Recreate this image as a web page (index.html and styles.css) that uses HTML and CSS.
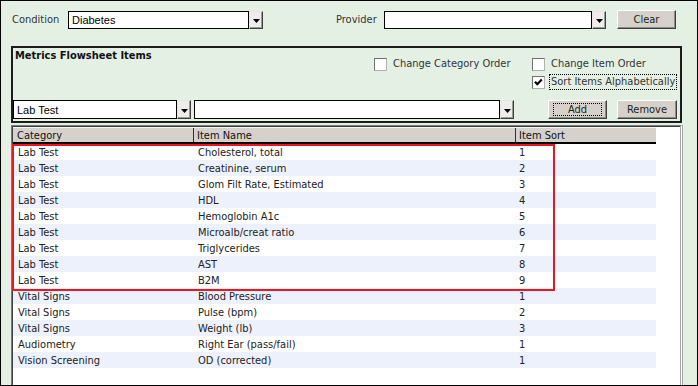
FILE: index.html
```html
<!DOCTYPE html>
<html>
<head>
<meta charset="utf-8">
<title>Metrics Flowsheet</title>
<link rel="stylesheet" href="styles.css">
</head>
<body>
<div class="window">
  <div class="toprow">
    <span class="lbl lbl-cond">Condition</span>
    <div class="combo c-cond"><span class="combo-text">Diabetes</span></div>
    <span class="ddbtn"><svg width="7" height="4" viewBox="0 0 7 4"><path d="M0 0h7L3.5 4z" fill="#000"/></svg></span>
    <span class="lbl lbl-prov">Provider</span>
    <div class="combo c-prov"></div>
    <span class="ddbtn"><svg width="7" height="4" viewBox="0 0 7 4"><path d="M0 0h7L3.5 4z" fill="#000"/></svg></span>
    <button class="btn btn-clear">Clear</button>
  </div>

  <div class="group">
    <div class="group-head">
      <div class="group-title">Metrics Flowsheet Items</div>
      <div class="checks">
        <label class="chk"><span class="box"></span><span class="chk-text">Change Category Order</span></label>
        <label class="chk"><span class="box"></span><span class="chk-text">Change Item Order</span></label>
        <span class="chk-empty"></span>
        <label class="chk"><span class="box"><svg width="11" height="11" viewBox="0 0 11 11"><path d="M2 4.8L4.3 7.2L8.8 2.6" fill="none" stroke="#000" stroke-width="2.2"/></svg></span><span class="chk-text focus">Sort Items Alphabetically</span></label>
      </div>
    </div>
    <div class="group-row">
      <div class="combo c-cat"><span class="combo-text">Lab Test</span></div>
      <span class="ddbtn"><svg width="7" height="4" viewBox="0 0 7 4"><path d="M0 0h7L3.5 4z" fill="#000"/></svg></span>
      <div class="combo c-item"></div>
      <span class="ddbtn"><svg width="7" height="4" viewBox="0 0 7 4"><path d="M0 0h7L3.5 4z" fill="#000"/></svg></span>
      <button class="btn btn-add"><span class="focus-u">Add</span></button>
      <button class="btn btn-remove">Remove</button>
    </div>
  </div>

  <div class="grid">
    <div class="grid-head">
      <div class="hcell col-cat">Category</div>
      <div class="hcell col-name">Item Name</div>
      <div class="hcell col-sort">Item Sort</div>
    </div>
    <div class="grid-body">
      <div class="row"><span class="cell col-cat">Lab Test</span><span class="cell col-name">Cholesterol, total</span><span class="cell col-sort">1</span></div>
      <div class="row"><span class="cell col-cat">Lab Test</span><span class="cell col-name">Creatinine, serum</span><span class="cell col-sort">2</span></div>
      <div class="row"><span class="cell col-cat">Lab Test</span><span class="cell col-name">Glom Filt Rate, Estimated</span><span class="cell col-sort">3</span></div>
      <div class="row"><span class="cell col-cat">Lab Test</span><span class="cell col-name">HDL</span><span class="cell col-sort">4</span></div>
      <div class="row"><span class="cell col-cat">Lab Test</span><span class="cell col-name">Hemoglobin A1c</span><span class="cell col-sort">5</span></div>
      <div class="row"><span class="cell col-cat">Lab Test</span><span class="cell col-name">Microalb/creat ratio</span><span class="cell col-sort">6</span></div>
      <div class="row"><span class="cell col-cat">Lab Test</span><span class="cell col-name">Triglycerides</span><span class="cell col-sort">7</span></div>
      <div class="row"><span class="cell col-cat">Lab Test</span><span class="cell col-name">AST</span><span class="cell col-sort">8</span></div>
      <div class="row"><span class="cell col-cat">Lab Test</span><span class="cell col-name">B2M</span><span class="cell col-sort">9</span></div>
      <div class="row"><span class="cell col-cat">Vital Signs</span><span class="cell col-name">Blood Pressure</span><span class="cell col-sort">1</span></div>
      <div class="row"><span class="cell col-cat">Vital Signs</span><span class="cell col-name">Pulse (bpm)</span><span class="cell col-sort">2</span></div>
      <div class="row"><span class="cell col-cat">Vital Signs</span><span class="cell col-name">Weight (lb)</span><span class="cell col-sort">3</span></div>
      <div class="row"><span class="cell col-cat">Audiometry</span><span class="cell col-name">Right Ear (pass/fail)</span><span class="cell col-sort">1</span></div>
      <div class="row"><span class="cell col-cat">Vision Screening</span><span class="cell col-name">OD (corrected)</span><span class="cell col-sort">1</span></div>
      <div class="highlight"></div>
    </div>
  </div>
</div>
</body>
</html>
```

FILE: styles.css
```css
html, body {
  margin: 0;
  padding: 0;
  background: #ffffff;
}

.window {
  width: 698px;
  height: 386px;
  box-sizing: border-box;
  border: 1px solid #000;
  background: #e5f0e5;
  display: flex;
  flex-direction: column;
  font-family: "DejaVu Sans Condensed", "DejaVu Sans", "Liberation Sans", sans-serif;
  font-stretch: condensed;
  font-size: 11px;
  color: #222;
}

/* ---------- top row ---------- */
.toprow {
  display: flex;
  align-items: flex-end;
  height: 19px;
  margin-top: 9px;
  padding-left: 11px;
}

.lbl {
  height: 18px;
  line-height: 18px;
  color: #333;
  white-space: nowrap;
}

.lbl-cond { width: 56px; }
.lbl-prov { width: 48px; margin-left: 73px; }

.combo {
  height: 18px;
  box-sizing: border-box;
  border: 1px solid #000;
  background: #fff;
  display: flex;
  align-items: center;
}

.combo-text {
  padding-left: 3px;
  font-family: "Liberation Sans", Arial, sans-serif;
  font-stretch: normal;
  font-size: 11px;
  color: #000;
}

.c-cond { width: 181px; }
.c-prov { width: 208px; }

.ddbtn {
  width: 14px;
  height: 18px;
  box-sizing: border-box;
  background: #f0ecec;
  border: 1px solid;
  border-color: #e8e4e4 #404040 #404040 #e8e4e4;
  box-shadow: inset -1px -1px 0 #9a9a9a;
  display: flex;
  align-items: center;
  justify-content: center;
  padding-top: 2px;
}

.ddbtn svg { display: block; }

.btn {
  height: 19px;
  width: 59px;
  box-sizing: border-box;
  background: #d6d2cb;
  border: 1px solid;
  border-color: #ffffff #404040 #404040 #ffffff;
  box-shadow: inset -1px -1px 0 #8a8a8a;
  font: inherit;
  color: #222;
  padding: 0;
  display: flex;
  align-items: center;
  justify-content: center;
}

.btn-clear { margin-left: 11px; }

/* ---------- group box ---------- */
.group {
  margin: 17px 0 0 10px;
  width: 671px;
  box-sizing: border-box;
  border: 2px solid #1c1c1c;
  padding-bottom: 2px;
}

.group-head {
  display: flex;
  height: 52px;
}

.group-title {
  flex: 1;
  padding: 1px 0 0 2px;
  font-weight: bold;
  color: #111;
  line-height: 13px;
}

.checks {
  display: grid;
  grid-template-columns: 158px 146px;
  grid-auto-rows: 18px;
  padding-top: 10px;
  margin-right: 2px;
  box-sizing: border-box;
}

.chk {
  display: flex;
  align-items: flex-start;
  height: 13px;
}

.box {
  width: 13px;
  height: 13px;
  box-sizing: border-box;
  background: #fff;
  border: 1px solid;
  border-color: #707070 #b0b0b0 #b0b0b0 #707070;
  flex: none;
  display: flex;
  align-items: center;
  justify-content: center;
}

.box svg { display: block; }

.chk-text {
  margin-left: 4px;
  margin-top: -2px;
  padding: 0 1px;
  border: 1px dotted transparent;
  line-height: 14px;
  color: #333;
  white-space: nowrap;
}

.chk-text.focus { border-color: #000; }

.group-row {
  display: flex;
  height: 19px;
}

.group-row .combo,
.group-row .ddbtn { height: 19px; }

.c-cat { width: 164px; }
.c-item { width: 306px; margin-left: 3px; }

.btn-add {
  margin-left: 34px;
}

.focus-u {
  display: block;
  width: 49px;
  height: 13px;
  line-height: 12px;
  box-sizing: border-box;
  border: 1px dotted #000;
  text-align: center;
}

.btn-remove {
  margin-left: 10px;
  width: 60px;
}

/* ---------- grid ---------- */
.grid {
  margin: 2px 0 0 10px;
  width: 672px;
  flex: 1;
  box-sizing: border-box;
  background: #fff;
  border-top: 1px solid #7a7a7a;
  border-left: 1px solid #7a7a7a;
  border-right: 3px double #a8a8a8;
  box-shadow: inset 1px 1px 0 #404040;
  padding: 1px 0 0 1px;
  display: flex;
  flex-direction: column;
}

.grid-head {
  display: flex;
  width: 643px;
  height: 17px;
  box-sizing: border-box;
  background: #d6d2cb;
  border-top: 1px solid #f4f4f4;
  border-bottom: 2px solid #000;
}

.hcell {
  box-sizing: border-box;
  line-height: 14px;
  padding-top: 1px;
  color: #111;
  white-space: nowrap;
}

.grid-head .col-cat { width: 181px; padding-left: 4px; border-right: 1px solid #303030; }
.grid-head .col-name { width: 322px; padding-left: 3px; border-right: 1px solid #303030; }
.grid-head .col-sort { width: 140px; padding-left: 3px; }

.grid-body {
  position: relative;
  flex: 1;
}

.row {
  display: flex;
  width: 643px;
  height: 16px;
  line-height: 17px;
  background: #fff;
}

.row:nth-child(even) { background: #edf1fc; }

.cell {
  box-sizing: border-box;
  white-space: nowrap;
  color: #222;
}

.row .col-cat { width: 181px; padding-left: 5px; }
.row .col-name { width: 322px; padding-left: 4px; }
.row .col-sort { width: 140px; padding-left: 3px; }

.highlight {
  position: absolute;
  left: -1px;
  top: 0;
  width: 543px;
  height: 147px;
  box-sizing: border-box;
  border: 2px solid #ee1520;
  pointer-events: none;
}
```
